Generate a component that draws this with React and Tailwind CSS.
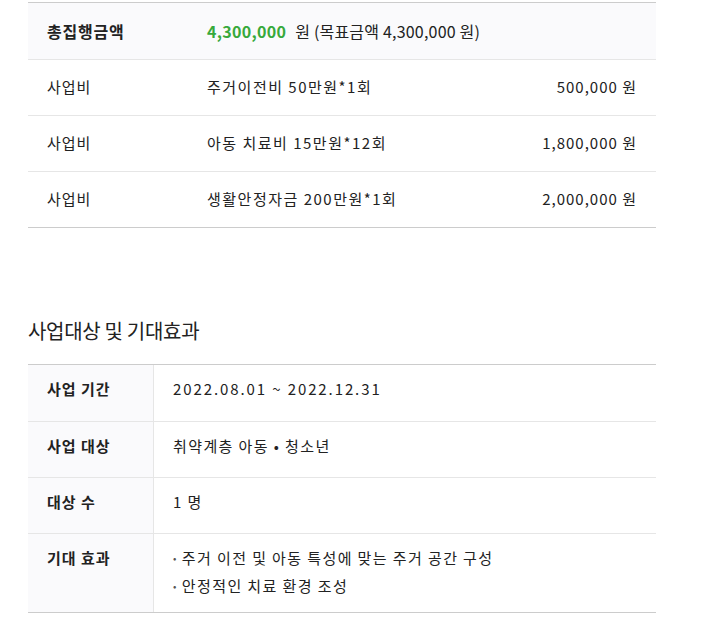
import React from "react";

const font = { fontFamily: '"Noto Sans CJK KR", "Noto Sans", sans-serif' };

const budgetRows = [
  { type: "사업비", desc: "주거이전비 50만원*1회", amount: "500,000" },
  { type: "사업비", desc: "아동 치료비 15만원*12회", amount: "1,800,000" },
  { type: "사업비", desc: "생활안정자금 200만원*1회", amount: "2,000,000" },
];

function InfoRow({ label, children, last, tall }) {
  const size = last ? "min-h-[78px]" : tall ? "min-h-[57px]" : "min-h-[56px]";
  return (
    <div className={`flex ${size} ${last ? "" : "border-b border-[#e6e6e6]"}`}>
      <div className="w-[126px] shrink-0 bg-[#fafafc] border-r border-[#e6e6e6] pl-[19px] pt-[13px] text-[15px] leading-[22px] font-bold text-[#222] tracking-[1px]">
        {label}
      </div>
      <div className="flex-1 pl-[19px] pt-[13px] text-[15px] leading-[22px] text-[#222] tracking-[1.4px]">
        {children}
      </div>
    </div>
  );
}

export default function App() {
  return (
    <div className="bg-white min-h-[640px] pt-[2px]" style={font}>
      <div className="ml-[28px] w-[628px]">
        {/* budget table */}
        <div className="border-t border-[#cccccc] border-b">
          <div className="flex items-center h-[57px] bg-[#fafafc] border-b border-[#e6e6e6]">
            <div className="w-[179px] pl-[19px] text-[16px] font-bold text-[#222] tracking-[0.8px]">
              총집행금액
            </div>
            <div className="text-[16px] text-[#222] tracking-[0.2px]">
              <span className="font-bold text-[#37a93b] tracking-[0.3px]">4,300,000</span>
              <span className="ml-[9px]">원 (목표금액 4,300,000 원)</span>
            </div>
          </div>
          {budgetRows.map((r, i) => {
            const last = i === budgetRows.length - 1;
            return (
              <div
                key={i}
                className={`flex items-center text-[15px] text-[#222] ${
                  last ? "h-[55px]" : "h-[56px] border-b border-[#e6e6e6]"
                }`}
              >
                <div className="w-[179px] pl-[19px] tracking-[1px]">{r.type}</div>
                <div className="flex-1 tracking-[1.5px]">{r.desc}</div>
                <div className="pr-[19px] text-right tracking-[1px]">{r.amount} 원</div>
              </div>
            );
          })}
        </div>

        <h3 className="mt-[88px] text-[20px] font-normal text-[#222] tracking-[-0.3px] leading-[30px]">
          사업대상 및 기대효과
        </h3>

        {/* info table */}
        <div className="mt-[18px] border-t border-b border-[#cccccc]">
          <InfoRow label="사업 기간" tall>
            <span className="tracking-[1.9px]">2022.08.01 ~ 2022.12.31</span>
          </InfoRow>
          <InfoRow label="사업 대상">취약계층 아동 • 청소년</InfoRow>
          <InfoRow label="대상 수">1 명</InfoRow>
          <InfoRow label="기대 효과" last>
            <ul className="leading-[28px] -mt-[3px]">
              <li className="flex gap-[4px]">
                <span className="text-[10px] text-[#555]">•</span>
                주거 이전 및 아동 특성에 맞는 주거 공간 구성
              </li>
              <li className="flex gap-[4px]">
                <span className="text-[10px] text-[#555]">•</span>
                안정적인 치료 환경 조성
              </li>
            </ul>
          </InfoRow>
        </div>
      </div>
    </div>
  );
}
